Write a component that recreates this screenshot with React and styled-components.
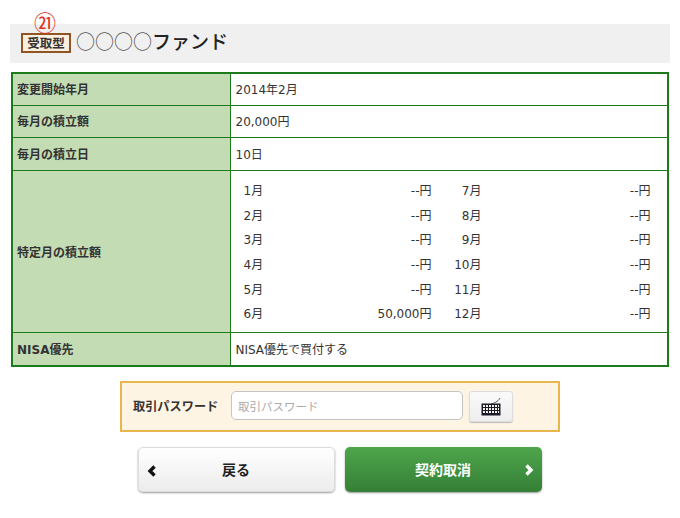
import React from "react";
import styled, { createGlobalStyle } from "styled-components";

const Global = createGlobalStyle`
  html, body { margin: 0; padding: 0; background: #fff; }
  body { font-family: "DejaVu Sans", "Noto Sans CJK JP", sans-serif; color: #333; font-size: 12px; }
`;
const Page = styled.div`
  width: 680px; height: 518px; padding: 24px 11px 0; box-sizing: border-box; overflow: hidden;
`;
const TitleBar = styled.div`
  position: relative; margin: 0 -1px; height: 39px; background: #f0f0f0;
  display: flex; align-items: center; padding-left: 11px; gap: 5px;
`;
const Marker = styled.span`
  position: absolute; left: 24px; top: -13px; color: #e0301e; font-size: 22px; line-height: 20px;
  font-family: "Noto Sans CJK JP", sans-serif;
`;
const Tag = styled.span`
  box-sizing: border-box; width: 50px; height: 20px; border: 2px solid #8f5524; background: #fbeedd;
  color: #333; font: 600 12.5px/16px "Noto Sans CJK JP", sans-serif; white-space: nowrap;
  display: flex; align-items: center; justify-content: center; margin-top: -1px;
`;
const FundName = styled.h1`
  margin: -6px 0 0; font-size: 19px; font-weight: 500; color: #222; line-height: 26px;
  font-family: "Noto Sans CJK JP", sans-serif;
`;
const Circles = styled.span`
  color: #555; font-weight: 400;
`;
const Table = styled.table`
  width: 658px; margin-top: 9px; border-collapse: collapse; border: 2px solid #1c7a1c; table-layout: fixed;
`;
const Head = styled.th`
  box-sizing: border-box; width: 218px; background: #c4dcb4; border: 1px solid #1c7a1c; text-align: left;
  padding: 0 0 ${p => p.$lift || 0}px 4px; font-size: 12px; font-weight: 700; color: #333; height: ${p => p.$h}px;
`;
const Cell = styled.td`
  box-sizing: border-box; border: 1px solid #1c7a1c; padding: 0 0 ${p => p.$lift || 0}px 5px; font-size: 12px; color: #333;
`;
const MonthGrid = styled.div`
  display: grid; grid-template-columns: 188px 219px; grid-auto-flow: column;
  grid-template-rows: repeat(6, 24.6px); padding: 7px 0 7px 8px; align-items: center;
`;
const Month = styled.div`
  display: flex; justify-content: space-between;
`;
const MonthLabel = styled.span`
  width: ${p => p.$w}px; text-align: ${p => p.$align};
`;
const Password = styled.div`
  box-sizing: border-box; width: 440px; height: 51px; margin: 14px auto 0; background: #fdf4e3;
  border: 2px solid #e8b64c; display: flex; align-items: center; padding-left: 11px;
`;
const PasswordLabel = styled.label`
  width: 98px; font: 700 12.2px "Noto Sans CJK JP", sans-serif; color: #333;
`;
const PasswordInput = styled.input`
  box-sizing: border-box; width: 232px; height: 29px; border: 1px solid #c4c4c4; border-radius: 5px;
  background: #fff; padding: 0 6px; font: 11.5px "Noto Sans CJK JP", sans-serif; margin-top: -1px;
  &::placeholder { color: #aaa; }
`;
const KeyButton = styled.button`
  box-sizing: border-box; width: 44px; height: 31px; margin: 0 0 0 6px; padding: 0; border: 1px solid #ddd;
  border-radius: 3px; background: linear-gradient(#fafafa, #eee); box-shadow: 0 1px 1px #bbb;
  display: flex; align-items: center; justify-content: center;
`;
const Buttons = styled.div`
  display: flex; gap: 10px; justify-content: center; margin: 15px 0 0 -1px;
`;
const NavButton = styled.button`
  position: relative; box-sizing: border-box; width: 197px; height: 45px; border-radius: 5px; padding: 0;
  font: 700 14px "Noto Sans CJK JP", sans-serif; display: flex; align-items: center; justify-content: center;
  border: ${p => p.$primary ? "0" : "1px solid #ddd"};
  background: ${p => p.$primary ? "linear-gradient(#4ea64b, #357f36)" : "linear-gradient(#fff, #ececec)"};
  color: ${p => p.$primary ? "#fff" : "#222"};
  box-shadow: 0 1px 2px rgba(0,0,0,.4);
`;
const Chevron = styled.svg`
  position: absolute; top: 17px; width: 10px; height: 12px;
  ${p => p.$side}: 8px;
`;

const rows = [
  ["1月", "--円", "7月", "--円"], ["2月", "--円", "8月", "--円"], ["3月", "--円", "9月", "--円"],
  ["4月", "--円", "10月", "--円"], ["5月", "--円", "11月", "--円"], ["6月", "50,000円", "12月", "--円"],
];

export default function App() {
  return (
    <Page>
      <Global />
      <TitleBar>
        <Marker>㉑</Marker>
        <Tag>受取型</Tag>
        <FundName><Circles>○○○○</Circles>ファンド</FundName>
      </TitleBar>
      <Table>
        <tbody>
          <tr><Head $h={32} $lift={1}>変更開始年月</Head><Cell $lift={1}>2014年2月</Cell></tr>
          <tr><Head $h={32} $lift={1}>毎月の積立額</Head><Cell $lift={1}>20,000円</Cell></tr>
          <tr><Head $h={33} $lift={1}>毎月の積立日</Head><Cell $lift={1}>10日</Cell></tr>
          <tr>
            <Head>特定月の積立額</Head>
            <Cell>
              <MonthGrid>
                {rows.map(r => <Month key={r[0]}><MonthLabel $w={20} $align="left">{r[0]}</MonthLabel><span>{r[1]}</span></Month>)}
                {rows.map(r => <Month key={r[2]}><MonthLabel $w={50} $align="right">{r[2]}</MonthLabel><span>{r[3]}</span></Month>)}
              </MonthGrid>
            </Cell>
          </tr>
          <tr><Head $h={33}>NISA優先</Head><Cell>NISA優先で買付する</Cell></tr>
        </tbody>
      </Table>
      <Password>
        <PasswordLabel>取引パスワード</PasswordLabel>
        <PasswordInput placeholder="取引パスワード" />
        <KeyButton aria-label="keyboard">
          <svg width="22" height="20" viewBox="0 0 22 20">
            <path d="M11 8 C14 7 18 6 20 2" stroke="#555" fill="none" />
            <rect x="1.5" y="7.5" width="19" height="12" fill="#1b1b2a" />
            <path d="M3 10h16M3 13h16M3 16h16" stroke="#f4f0e8" strokeWidth="2" strokeDasharray="2 1" />
          </svg>
        </KeyButton>
      </Password>
      <Buttons>
        <NavButton>
          <Chevron $side="left" viewBox="0 0 10 12"><path d="M7.5 1.5 3 6l4.5 4.5" fill="none" stroke="#111" strokeWidth="3.4" /></Chevron>
          戻る
        </NavButton>
        <NavButton $primary>
          契約取消
          <Chevron $side="right" viewBox="0 0 10 12"><path d="M2.5 1.5 7 6l-4.5 4.5" fill="none" stroke="#fff" strokeWidth="3.4" /></Chevron>
        </NavButton>
      </Buttons>
    </Page>
  );
}
